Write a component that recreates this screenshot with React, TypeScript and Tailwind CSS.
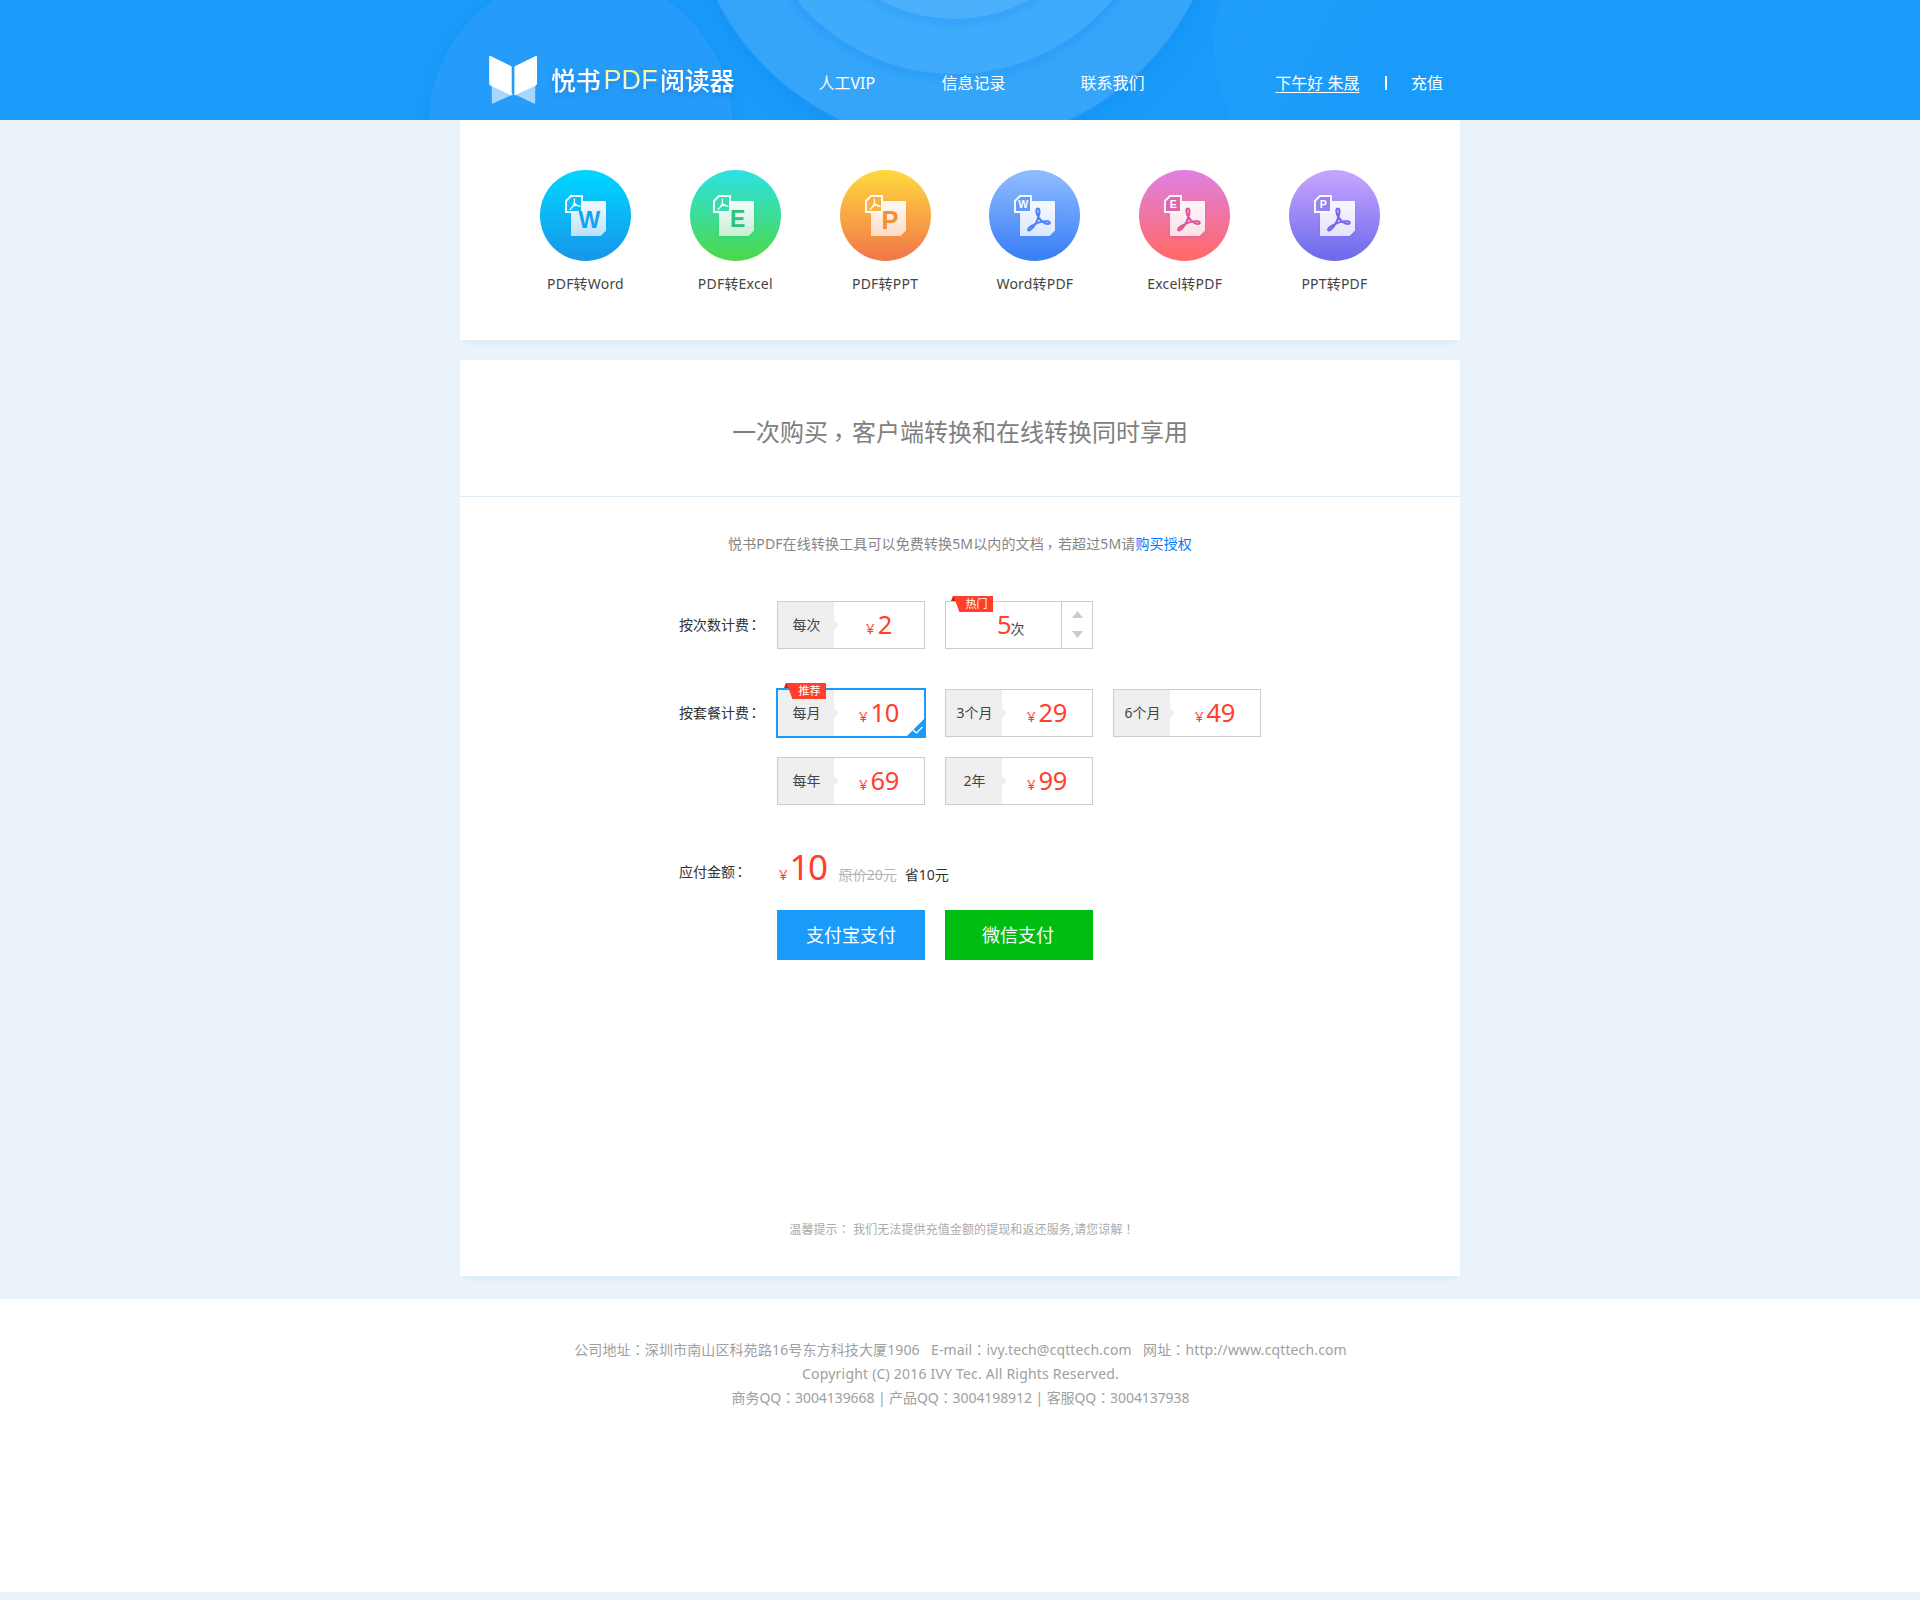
import type { ReactNode } from "react";

type ToolKind = {
  id: string;
  label: string;
  from: string;
  to: string;
  ink: string;
  letter: string;
  toPdf: boolean;
  dx: number;
  mid: string;
};

const tools: ToolKind[] = [
  { id: "p2w", label: "PDF转Word", from: "#00d4ff", to: "#1798ea", mid: "#0bbdf9", ink: "#14a2ee", letter: "W", toPdf: false, dx: 0 },
  { id: "p2e", label: "PDF转Excel", from: "#2fe1dc", to: "#4bd850", mid: "#37dcb0", ink: "#2fc178", letter: "E", toPdf: false, dx: -2 },
  { id: "p2p", label: "PDF转PPT", from: "#ffd43d", to: "#f27a4a", mid: "#fbb13f", ink: "#f78f35", letter: "P", toPdf: false, dx: 0 },
  { id: "w2p", label: "Word转PDF", from: "#8cbaff", to: "#3a80f6", mid: "#5f9bfb", ink: "#4a83fb", letter: "W", toPdf: true, dx: 0 },
  { id: "e2p", label: "Excel转PDF", from: "#e07fdc", to: "#ff6a6a", mid: "#e066ac", ink: "#dd5597", letter: "E", toPdf: true, dx: 0 },
  { id: "t2p", label: "PPT转PDF", from: "#c4a3ff", to: "#6f6cec", mid: "#9a80f6", ink: "#7766ee", letter: "P", toPdf: true, dx: 0 },
];

const acrobat =
  "M48.9 38.6C46.6 38.6 47 43 49.5 47C51.5 50.5 55.5 54 59 54C61.4 54 61.4 51.3 58.5 51.2C53.5 51.1 46 53.4 41.5 56.6C37.6 59.5 39.3 61.4 41.5 59.8C45 57 48.5 50.5 49.8 45.5C50.9 41 50.8 38.6 48.9 38.6Z";

function ToolIcon({ t }: { t: ToolKind }) {
  const bigSize = t.letter === "P" ? 25.5 : 23;
  const bigX = t.letter === "W" ? 49.3 : t.letter === "E" ? 49.6 : 50;
  const bigY = t.letter === "W" ? 58.3 : t.letter === "E" ? 57 : 58.8;
  return (
    <svg width="91" height="91" viewBox="0 0 91 91" className="block">
      <defs>
        <linearGradient id={`${t.id}-bg`} x1="0" y1="0" x2="0" y2="1">
          <stop offset="0.05" stopColor={t.from} />
          <stop offset="0.95" stopColor={t.to} />
        </linearGradient>
        <linearGradient id={`${t.id}-doc`} x1="0" y1="0" x2="0" y2="1">
          <stop offset="0" stopColor="#fff" stopOpacity="0.93" />
          <stop offset="1" stopColor="#fff" stopOpacity={t.toPdf ? 0.76 : 0.64} />
        </linearGradient>
        <filter id={`${t.id}-sh`} x="-30%" y="-30%" width="160%" height="170%">
          <feDropShadow dx="0" dy="2" stdDeviation="1.4" floodColor={t.ink} floodOpacity="0.6" />
        </filter>
      </defs>
      <circle cx="45.5" cy="45.5" r="45.5" fill={`url(#${t.id}-bg)`} />
      <g transform={`translate(${t.dx} 0)`}>
        <path d="M43 31H65a1 1 0 0 1 1 1V60.5L60.5 66H31V43H43Z" fill={`url(#${t.id}-doc)`} filter={`url(#${t.id}-sh)`} />
        <path d="M31 26H42V42H26V31Z" fill={t.mid} stroke="#fff" strokeWidth="2" strokeOpacity="0.95" />
        {t.toPdf ? (
          <>
            <text x="34.2" y="38" textAnchor="middle" fontSize="10.5" fontWeight="700" fill="#fff" className="font-['Liberation_Sans',sans-serif]">
              {t.letter}
            </text>
            <path d={acrobat} fill="none" stroke={t.ink} strokeWidth="2.1" strokeLinejoin="round" />
          </>
        ) : (
          <>
            <path
              d="M34.4 29.2V33.2Q33 37 30 39.6M34.4 33.2Q36.3 36 40 36.3M32.8 36.3Q34.8 35 37.4 35.1"
              fill="none"
              stroke="#fff"
              strokeWidth="1.2"
              strokeLinecap="round"
            />
            <text x={bigX} y={bigY} textAnchor="middle" fontSize={bigSize} fontWeight="700" fill={t.ink} className="font-['Liberation_Sans',sans-serif]">
              {t.letter}
            </text>
          </>
        )}
      </g>
    </svg>
  );
}

function Colon() {
  return <span className="font-['Noto_Sans_CJK_TC',sans-serif] leading-none">：</span>;
}

function Comma() {
  return <span className="relative top-[0.2em] -left-[0.06em] font-['Noto_Sans_CJK_TC',sans-serif] leading-none">，</span>;
}

function HeaderArt() {
  return (
    <svg className="absolute inset-0" width="1920" height="120" viewBox="0 0 1920 120">
      <defs>
        <filter id="halo" x="-20%" y="-20%" width="140%" height="140%">
          <feDropShadow dx="0" dy="4" stdDeviation="11" floodColor="#1082ee" floodOpacity="0.5" />
        </filter>
        <filter id="halo-soft" x="-20%" y="-20%" width="140%" height="140%">
          <feDropShadow dx="0" dy="3" stdDeviation="6" floodColor="#1a86f5" floodOpacity="0.4" />
        </filter>
        <linearGradient id="fade" x1="0" y1="0" x2="1" y2="0.5">
          <stop offset="0" stopColor="#229efb" />
          <stop offset="0.7" stopColor="#1a9bf9" />
        </linearGradient>
      </defs>
      <circle cx="1381" cy="45" r="167" fill="url(#fade)" />
      <circle cx="580.5" cy="125" r="152" fill="#279cfa" filter="url(#halo-soft)" />
      <circle cx="954.8" cy="-122" r="267.5" fill="#35a5f9" filter="url(#halo)" />
      <circle cx="954.5" cy="-131" r="205" fill="#41abfb" filter="url(#halo-soft)" />
      <circle cx="954.5" cy="-136" r="155" fill="#4bb0fc" filter="url(#halo-soft)" />
    </svg>
  );
}

function Logo() {
  return (
    <div className="flex">
      <svg width="50" height="52" viewBox="0 0 50 52" className="block">
        <path d="M2.8 30L24.5 41.3L4 50.5Q2.8 51 2.8 50Z" fill="#a9d6fd" />
        <path d="M46.2 30L25.5 41.3L44.8 50.5Q46.2 51 46.2 50Z" fill="#a9d6fd" />
        <path d="M1.5 3.1L22.7 13.4V42.6L1.3 32.4Q0.2 31.8 0.2 30.6V3.8Q0.2 2.5 1.5 3.1Z" fill="#fff" />
        <path d="M46.7 3.1L25.4 13.4V42.6L46.9 32.4Q48 31.8 48 30.6V3.8Q48 2.5 46.7 3.1Z" fill="#fff" />
      </svg>
      <div className="ml-3 flex h-[54px] w-[184px] items-center whitespace-nowrap text-[25px] font-medium leading-[54px] tracking-[-0.3px] text-white drop-shadow-[0_3px_3px_rgba(16,110,220,0.55)]">
        <span>悦书</span>
        <span className="ml-[3px] mr-[2px] bg-gradient-to-b from-[#fff99a] from-40% to-[#e2f3f8] to-68% bg-clip-text font-['Liberation_Sans',sans-serif] text-[27px] font-normal tracking-[0.2px] text-transparent">
          PDF
        </span>
        <span>阅读器</span>
      </div>
    </div>
  );
}

function Badge({ children, raised }: { children: ReactNode; raised?: boolean }) {
  return (
    <div className={raised ? "absolute -top-[7px] left-[6px] h-4 w-[42px]" : "absolute -top-[6px] left-[5px] h-4 w-[42px]"}>
      <svg width="42" height="16" viewBox="0 0 42 16" className="absolute inset-0">
        <path d="M2 0H6V5H0Z" fill="#d81e0c" />
        <path d="M2.5 0H42V16H8.4Z" fill="#ff3f2c" />
      </svg>
      <span className="absolute left-[14.5px] top-0 whitespace-nowrap text-[11px] leading-4 text-white">{children}</span>
    </div>
  );
}

function Price({ value }: { value: string }) {
  return (
    <div className="flex flex-1 items-baseline justify-center text-[#ff402d]">
      <span className="text-[15px] leading-[44px]">¥</span>
      <span className="ml-[3px] text-[25.5px] leading-[44px] tracking-[-0.3px]">{value}</span>
    </div>
  );
}

function Option({ name, value, active, badge }: { name: string; value: string; active?: boolean; badge?: string }) {
  return (
    <div className={active ? "relative flex h-12 w-[148px] border border-transparent outline-2 -outline-offset-1 outline-[#1a9bfa]" : "relative flex h-12 w-[148px] border border-[#ccc]"}>
      <div className="w-14 bg-[#efefef] pl-px text-center text-sm leading-[46px] text-[#444]">{name}</div>
      <svg width="5" height="10" viewBox="0 0 5 10" className="mt-[18px] -mr-[5px] block shrink-0">
        <path d="M0 0L5 5L0 10Z" fill="#efefef" />
      </svg>
      <Price value={value} />
      {badge && <Badge raised={active}>{badge}</Badge>}
      {active && (
        <svg width="21" height="21" viewBox="0 0 21 21" className="absolute -bottom-[2px] -right-[2px]">
          <path d="M21 0V21H0Z" fill="#1a9bfa" />
          <path d="M8 13L11.5 16L17.5 10" fill="none" stroke="#fff" strokeWidth="1.2" />
        </svg>
      )}
    </div>
  );
}

function RowLabel({ children }: { children: ReactNode }) {
  return (
    <div className="h-12 w-[98px] shrink-0 whitespace-nowrap text-sm leading-[48px] text-[#333]">
      {children}
      <span className="relative -left-[2px] leading-none"><Colon /></span>
    </div>
  );
}

export default function App() {
  return (
    <div className="h-[1600px] w-[1920px] overflow-hidden bg-[#eaf3fa] font-['Noto_Sans','Noto_Sans_CJK_SC',sans-serif]">
      <header className="relative h-[120px] bg-[#1a9bf9]">
        <HeaderArt />
        <div className="relative mx-auto flex h-full w-[1000px] pl-[29px] pt-[53px] text-base leading-[60px] text-white">
          <Logo />
          <nav className="ml-[83.5px] flex whitespace-nowrap">
            <a className="w-[123px]">人工VIP</a>
            <a className="w-[139px]">信息记录</a>
            <a>联系我们</a>
          </nav>
          <div className="ml-auto flex whitespace-nowrap pr-[17px]">
            <a className="underline decoration-1 underline-offset-[3px]">下午好 朱晟</a>
            <span className="ml-[26px] mt-[23px] h-[14px] w-[1.5px] bg-white" />
            <a className="ml-[24px]">充值</a>
          </div>
        </div>
      </header>

      <section className="mx-auto flex h-[220px] w-[1000px] bg-white pl-[50.6px] pt-[50px] shadow-[0_8px_8px_-7px_rgba(190,222,235,0.6)]">
        {tools.map((t) => (
          <div key={t.id} className="flex w-[149.8px] flex-col items-center">
            <ToolIcon t={t} />
            <span className="mt-[11px] text-sm leading-6 tracking-[0.2px] text-[#444]">{t.label}</span>
          </div>
        ))}
      </section>

      <section className="mx-auto mt-5 flex h-[916px] w-[1000px] flex-col bg-white shadow-[0_8px_8px_-7px_rgba(190,222,235,0.6)]">
        <h1 className="h-[137px] border-b border-[#dfecf6] pt-[51px] text-center text-2xl leading-[41px] text-[#808080]">
          一次购买<Comma />客户端转换和在线转换同时享用
        </h1>
        <p className="mt-[35px] h-6 text-center text-sm leading-6 tracking-[0.13px] text-[#858585]">
          悦书PDF在线转换工具可以免费转换5M以内的文档<Comma />若超过5M请<a className="text-[#007bff]">购买授权</a>
        </p>

        <div className="mt-[45px] flex pl-[219px]">
          <RowLabel>按次数计费</RowLabel>
          <div className="flex gap-5">
            <Option name="每次" value="2" />
            <div className="relative flex h-12 w-[148px] border border-[#ccc]">
              <div className="flex flex-1 items-baseline pl-[51px]">
                <span className="text-[25.5px] leading-[44px] text-[#ff402d]">5</span>
                <span className="-ml-px text-sm leading-[44px] text-[#444]">次</span>
              </div>
              <div className="flex w-[31px] flex-col items-center gap-[13px] border-l border-[#ccc] pt-[9px]">
                <svg width="11" height="7" viewBox="0 0 11 7" className="block">
                  <path d="M5.5 0L11 7H0Z" fill="#ccc" />
                </svg>
                <svg width="11" height="7" viewBox="0 0 11 7" className="block">
                  <path d="M5.5 7L11 0H0Z" fill="#ccc" />
                </svg>
              </div>
              <Badge>热门</Badge>
            </div>
          </div>
        </div>

        <div className="mt-10 flex pl-[219px]">
          <RowLabel>按套餐计费</RowLabel>
          <div className="grid grid-cols-[148px_148px_148px] gap-5">
            <Option name="每月" value="10" active badge="推荐" />
            <Option name="3个月" value="29" />
            <Option name="6个月" value="49" />
            <Option name="每年" value="69" />
            <Option name="2年" value="99" />
          </div>
        </div>

        <div className="mt-[43px] flex h-[62px] pl-[219px]">
          <RowLabel>应付金额</RowLabel>
          <div className="flex h-12 items-baseline whitespace-nowrap pl-[2px] text-sm leading-[38px]">
            <span className="text-[15px] text-[#ff402d]">¥</span>
            <span className="ml-[2px] text-[35px] tracking-[-1.5px] text-[#ff402d]">10</span>
            <span className="ml-3 text-[#b5b5b5] line-through">原价20元</span>
            <span className="ml-2 text-[#333]">省10元</span>
          </div>
        </div>

        <div className="flex gap-5 pl-[317px] text-center text-lg leading-[50px] text-white">
          <button className="h-[50px] w-[148px] bg-[#1a9bfa]">支付宝支付</button>
          <button className="h-[50px] w-[148px] bg-[#00bd12] pr-[2px]">微信支付</button>
        </div>

        <p className="mb-[34px] mt-auto h-6 pl-1 text-center text-xs leading-6 tracking-[0.1px] text-[#aaa]">
          温馨提示<Colon /> 我们无法提供充值金额的提现和返还服务,请您谅解
          <span className="font-['Noto_Sans_CJK_TC',sans-serif] leading-none">！</span>
        </p>
      </section>

      <footer className="mt-[23px] h-[293px] whitespace-pre bg-white pl-px pt-[39px] text-center text-sm leading-6 text-[#a0a0a0]">
        <p className="h-6 tracking-[0.13px]">公司地址<Colon />深圳市南山区科苑路16号东方科技大厦1906   E-mail<Colon />ivy.tech@cqttech.com   网址<Colon />http://www.cqttech.com</p>
        <p className="h-6 tracking-[0.2px]">Copyright (C) 2016 IVY Tec. All Rights Reserved.</p>
        <p className="h-6 tracking-[-0.08px]">商务QQ<Colon />3004139668 | 产品QQ<Colon />3004198912 | 客服QQ<Colon />3004137938</p>
      </footer>
    </div>
  );
}
